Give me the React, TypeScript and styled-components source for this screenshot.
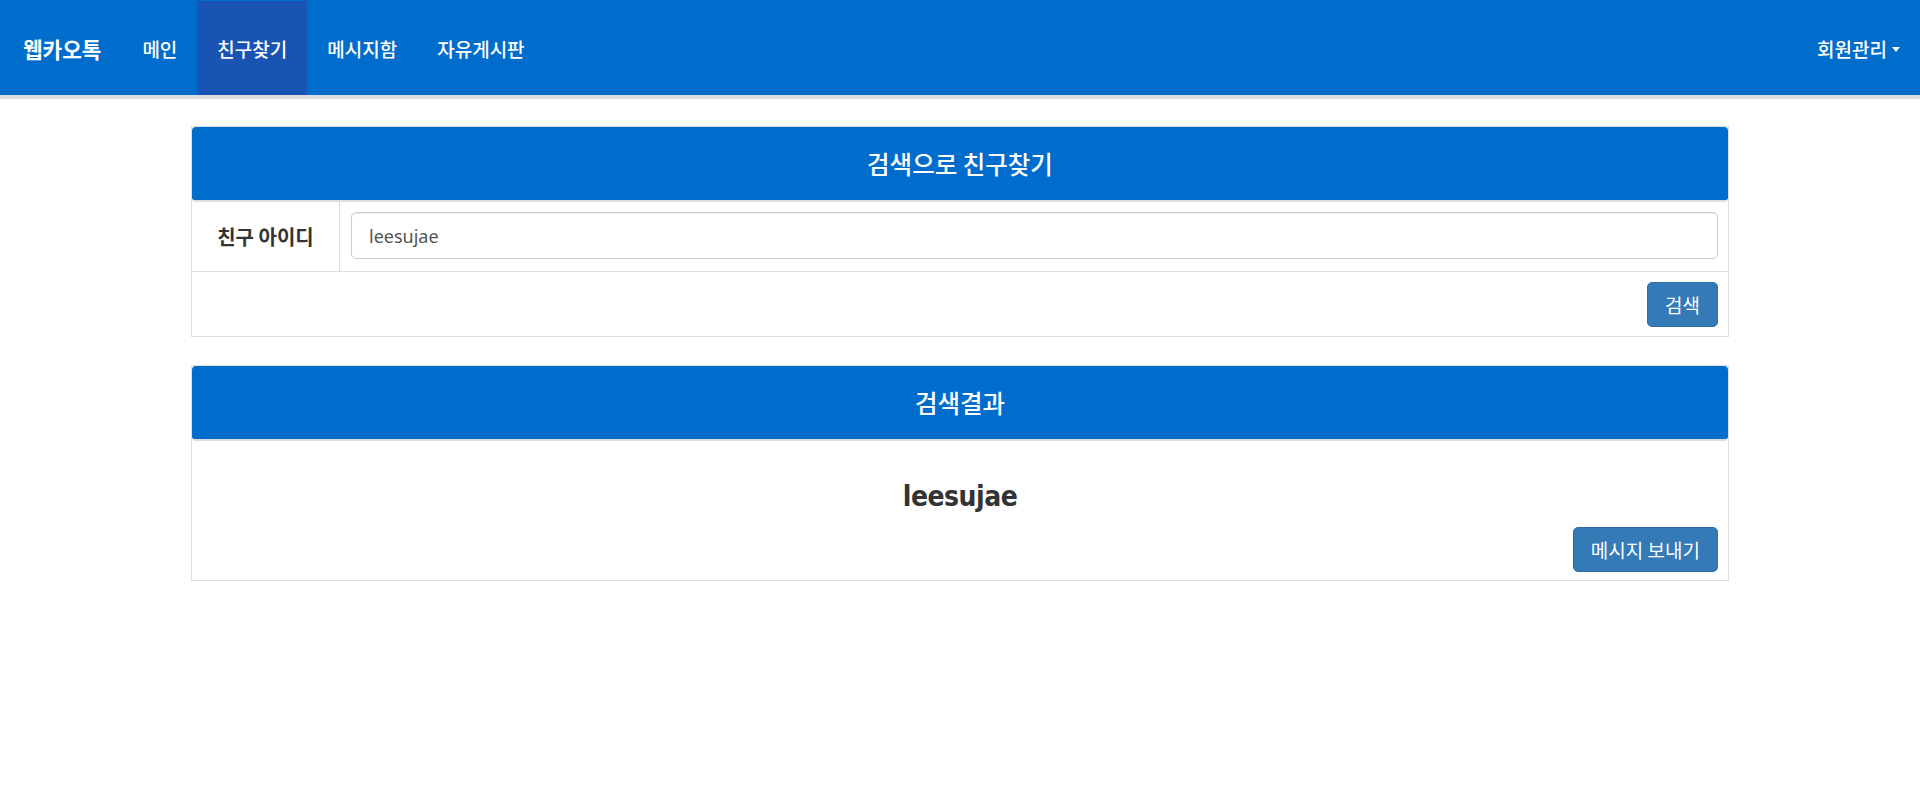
import React from 'react'
import styled, { createGlobalStyle } from 'styled-components'

const blue = '#006dcc'
const line = '#dddddd'

const GlobalStyle = createGlobalStyle`
  body {
    margin: 0;
    background: #fff;
    font-family: "Noto Sans CJK KR", "Noto Sans", sans-serif;
    color: #333;
  }
`

const Navbar = styled.nav`
  display: flex;
  align-items: stretch;
  justify-content: space-between;
  height: 95px;
  background-color: ${blue};
  border-bottom: 4px solid #dcdcdc;
`

const NavGroup = styled.div`
  display: flex;
  align-items: stretch;
  padding-top: 1px;
`

const Brand = styled.a`
  display: flex;
  align-items: center;
  padding: 0 21px 0 23px;
  font-size: 21.3px;
  font-weight: 700;
  color: #fff;
  text-decoration: none;
`

const NavItem = styled.a<{ $active?: boolean }>`
  display: flex;
  align-items: center;
  gap: 5px;
  padding: 0 20px;
  font-size: 19px;
  font-weight: 500;
  color: #fff;
  text-decoration: none;
  background-color: ${p => (p.$active ? '#1953b4' : 'transparent')};
`

const Caret = styled.span`
  width: 0;
  height: 0;
  border-left: 4.5px solid transparent;
  border-right: 4.5px solid transparent;
  border-top: 5px solid #fff;
  margin-top: 2px;
`

const Container = styled.main`
  width: 1538px;
  margin: 27px auto 0;
  display: flex;
  flex-direction: column;
  gap: 28px;
`

const Card = styled.section`
  border: 1px solid ${line};
  background: #fff;
`

const CardHeader = styled.h2`
  margin: 0;
  height: 73px;
  display: flex;
  align-items: center;
  justify-content: center;
  background-color: ${blue};
  border-radius: 4px;
  border-bottom: 2px solid ${line};
  box-sizing: content-box;
  color: #fff;
  font-size: 24.5px;
  font-weight: 500;
`

const FormRow = styled.div`
  display: grid;
  grid-template-columns: 148px 1fr;
  border-bottom: 1px solid ${line};
`

const Label = styled.label`
  display: flex;
  align-items: center;
  justify-content: center;
  border-right: 1px solid ${line};
  font-size: 20px;
  font-weight: 700;
  color: #333;
`

const InputCell = styled.div`
  padding: 10px 10px 12px 11px;
`

const Input = styled.input`
  display: block;
  width: 100%;
  height: 47px;
  box-sizing: border-box;
  padding: 0 17px;
  border: 1px solid #ccc;
  border-radius: 5px;
  font-family: "Noto Sans", sans-serif;
  font-size: 18px;
  color: #555;
  box-shadow: inset 0 1px 1px rgba(0, 0, 0, 0.075);
`

const Actions = styled.div<{ $pad?: string }>`
  display: flex;
  justify-content: flex-end;
  padding: ${p => p.$pad || '10px 10px 9px'};
`

const Button = styled.button`
  height: 45px;
  padding: 0 17px;
  border: 1px solid #2e6da4;
  border-radius: 5px;
  background-color: #337ab7;
  color: #fff;
  font-family: "Noto Sans CJK KR", "Noto Sans", sans-serif;
  font-size: 19px;
  cursor: pointer;
`

const ResultBody = styled.div`
  padding-top: 38px;
`

const ResultName = styled.div`
  text-align: center;
  font-family: "DejaVu Sans", sans-serif;
  font-stretch: condensed;
  font-weight: 700;
  font-size: 28px;
  line-height: 36px;
  color: #333;
  letter-spacing: -0.5px;
`

export default function App() {
  return (
    <>
      <GlobalStyle />
      <Navbar>
        <NavGroup>
          <Brand href="#">웹카오톡</Brand>
          <NavItem href="#">메인</NavItem>
          <NavItem href="#" $active>친구찾기</NavItem>
          <NavItem href="#">메시지함</NavItem>
          <NavItem href="#">자유게시판</NavItem>
        </NavGroup>
        <NavGroup>
          <NavItem href="#">회원관리<Caret /></NavItem>
        </NavGroup>
      </Navbar>
      <Container>
        <Card>
          <CardHeader>검색으로 친구찾기</CardHeader>
          <FormRow>
            <Label htmlFor="friendId">친구 아이디</Label>
            <InputCell>
              <Input id="friendId" defaultValue="leesujae" />
            </InputCell>
          </FormRow>
          <Actions>
            <Button>검색</Button>
          </Actions>
        </Card>
        <Card>
          <CardHeader>검색결과</CardHeader>
          <ResultBody>
            <ResultName>leesujae</ResultName>
            <Actions $pad="12px 10px 8px">
              <Button>메시지 보내기</Button>
            </Actions>
          </ResultBody>
        </Card>
      </Container>
    </>
  )
}
